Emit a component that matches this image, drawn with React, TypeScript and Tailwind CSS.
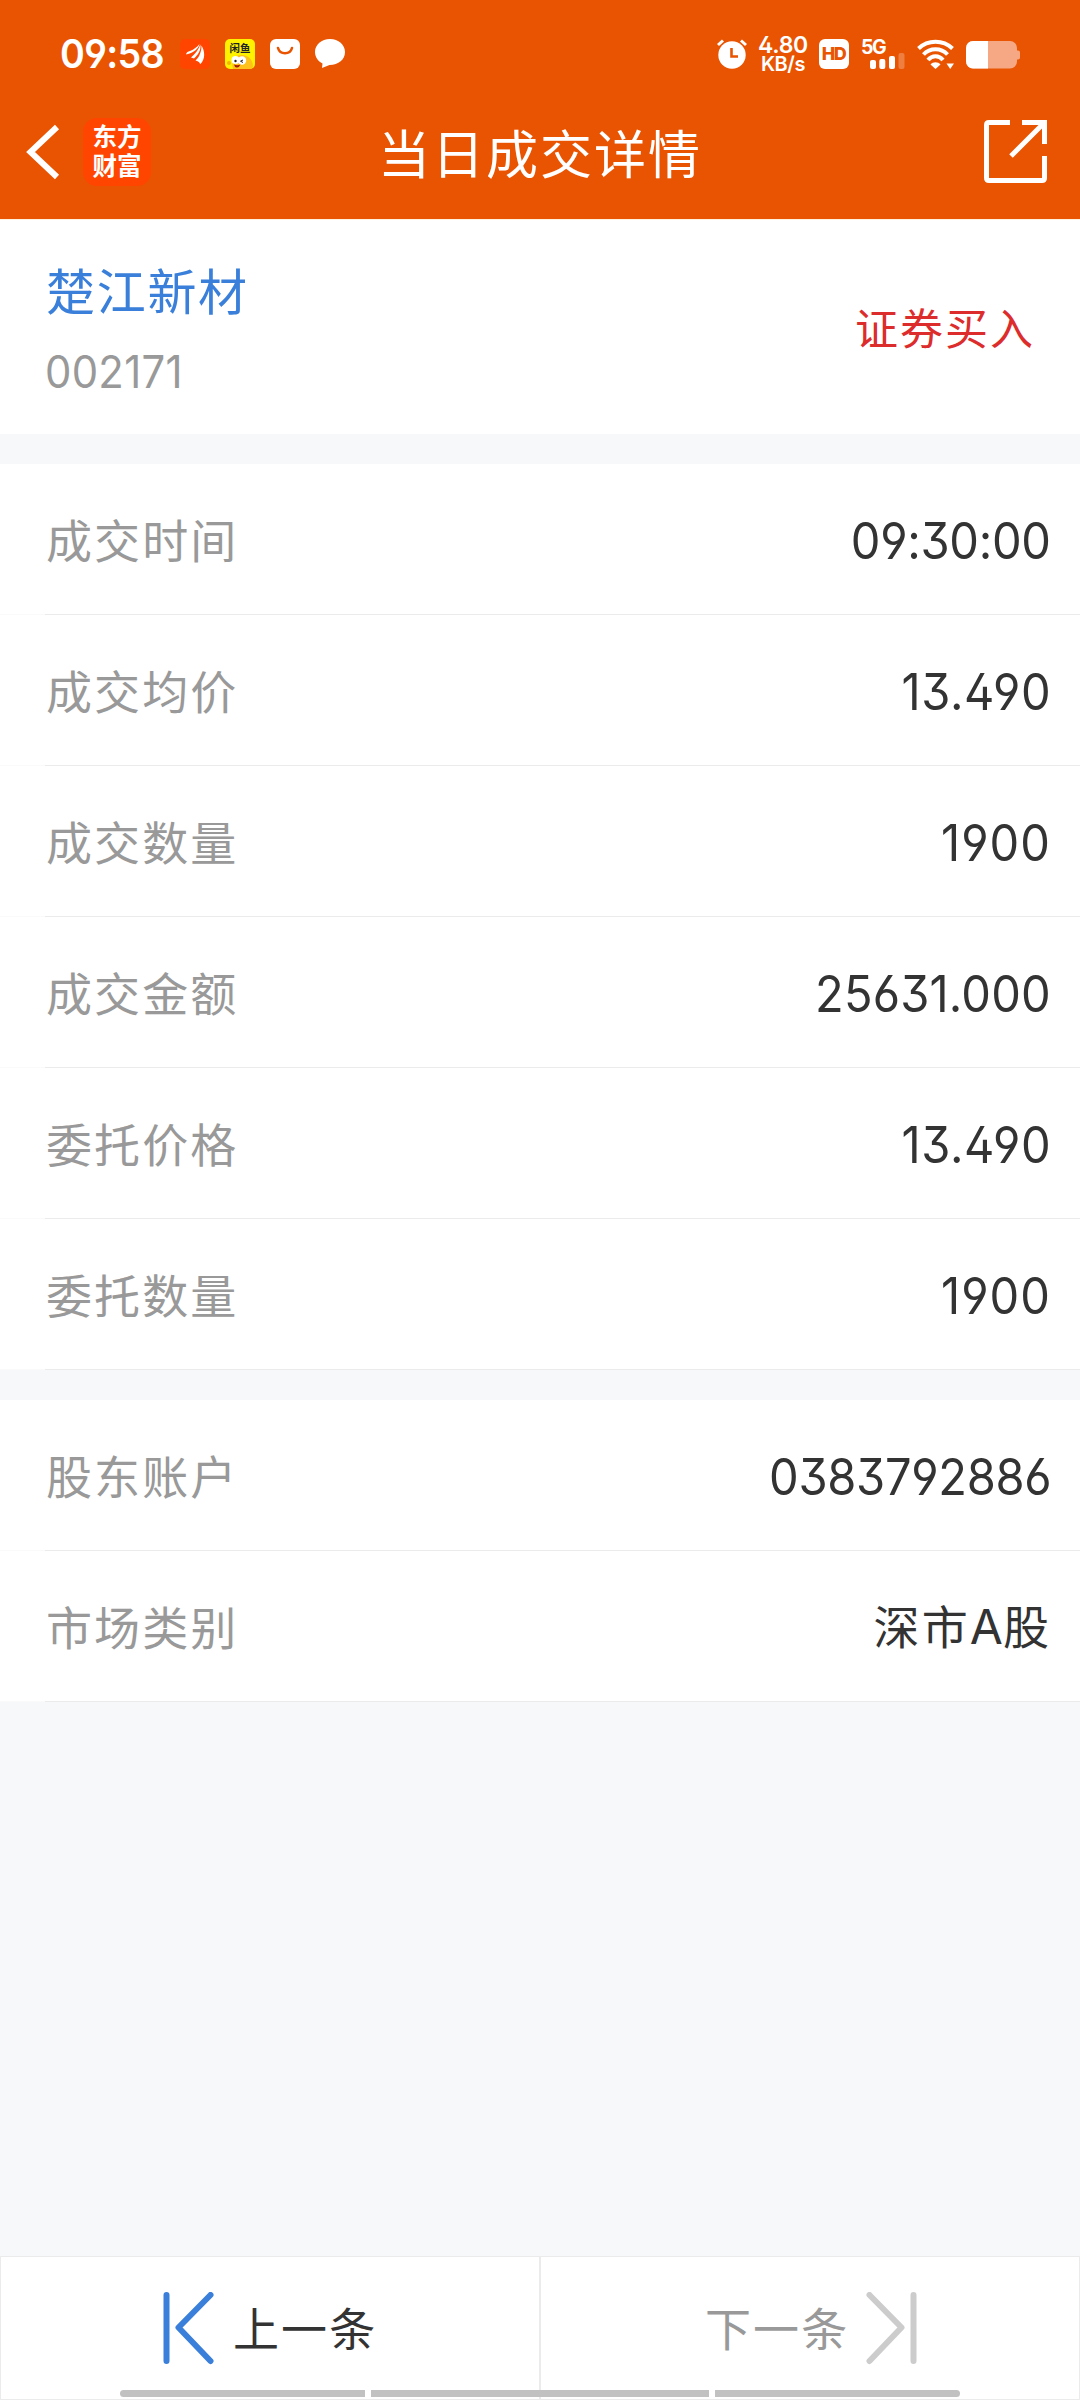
const tradeRows = [
  { label: '成交时间', value: '09:30:00' },
  { label: '成交均价', value: '13.490', spacing: 'tracking-[0.600px]' },
  { label: '成交数量', value: '1900', spacing: 'tracking-[1.100px]' },
  { label: '成交金额', value: '25631.000', spacing: 'tracking-[0.200px]' },
  { label: '委托价格', value: '13.490', spacing: 'tracking-[0.600px]' },
  { label: '委托数量', value: '1900', spacing: 'tracking-[1.100px]' },
];

// Números con Inter (ss01 = dígitos abiertos), textos con Noto CJK
const num = "font-['Inter','Noto_Sans_CJK_SC',sans-serif] [font-feature-settings:'ss01']";

function StatusBar() {
  return (
    <div className="h-[84px] pt-6 flex justify-between items-center text-white">
      <div className="flex items-center pl-[60px]">
        <span className={`${num} w-[120px] origin-left scale-x-[.94] text-[40px] leading-[60px] font-semibold tracking-[-0.700px]`}>09:58</span>
        <div className="flex gap-[15px]">
          <svg width="30" height="30" viewBox="0 0 30 30">
            <rect width="30" height="30" rx="5" fill="#ff4500" />
            <path d="M6 15.500C6.500 13 8 12.500 10 12C14 10.500 17 8 19.500 5C18.500 9.500 14.500 13.500 6 15.500Z" fill="#fff" />
            <path d="M11 18.500C15 15 18.500 11 20.300 5.500C21.500 11 17.500 16.500 14 19.500Z" fill="#fff" />
            <path d="M15.500 21.500C19.500 18 21.500 12 21.500 6.500C25 12 25.500 20 20.500 25C19.500 24.500 20 22.500 15.500 21.500Z" fill="#fff" />
          </svg>
          <svg width="30" height="30" viewBox="0 0 30 30">
            <rect width="30" height="30" rx="5" fill="#fff200" />
            <path d="M8 30C6 22 9 16 16 16C23 16 28 20 28 28L26 30Z" fill="#ffc21a" />
            <circle cx="4" cy="24" r="2" fill="#f5b400" />
            <circle cx="10.500" cy="21" r="4" fill="#fff" />
            <circle cx="17" cy="21.500" r="4.200" fill="#fff" />
            <circle cx="10.500" cy="22" r="1.200" fill="#222" />
            <path d="M18 21L15.500 22.200L18 23.500" fill="none" stroke="#222" strokeWidth="1" />
            <path d="M9 25.500Q12 27 15.500 25.500Q14 29 11.500 28.500Q9.500 28 9 25.500Z" fill="#a51b0a" />
            <text x="15" y="13" textAnchor="middle" fontSize="10.500" className="font-['Noto_Sans_CJK_SC',sans-serif] font-bold" fill="#222">闲鱼</text>
          </svg>
          <svg width="30" height="30" viewBox="0 0 30 30">
            <rect width="30" height="30" rx="6" fill="#fff" />
            <path d="M8 9C10 16 20 16 22 9" fill="none" stroke="#e95402" strokeWidth="2.600" strokeLinecap="round" />
          </svg>
          <svg width="30" height="30" viewBox="0 0 30 30">
            <path d="M15 0C6.500 0 0 5.800 0 13C0 18 3 22.300 7.500 24.500L7 29L14.500 26C23.500 26 30 20.500 30 13C30 5.800 23.500 0 15 0Z" fill="#fff" />
          </svg>
        </div>
      </div>

      <div className="flex items-center pr-[60px]">
        <svg width="30" height="30" viewBox="0 0 30 30" className="mr-[11px]">
          <circle cx="15" cy="16" r="13.700" fill="#fff" />
          <path d="M1 6L6 1.500M29 6L24 1.500" stroke="#fff" strokeWidth="3" />
          <path d="M14.500 9V17.500H21" fill="none" stroke="#e95402" strokeWidth="2.600" />
        </svg>
        <div className={`${num} w-[50px] mr-[11px] text-center font-semibold`}>
          <div className="text-[23px] leading-[20px] tracking-[-0.300px]">4.80</div>
          <div className="text-[20px] leading-[19px] tracking-[-0.400px]">KB/s</div>
        </div>
        <div className={`${num} size-[30px] mr-3 rounded-[6px] bg-white text-[#e95402] text-[18px] leading-[30px] font-extrabold text-center tracking-[-1.500px] pr-[1px]`}>HD</div>
        <svg width="45" height="30" viewBox="0 0 45 30" className="mr-[11px] overflow-visible">
          <text x="0" y="14.500" fontSize="19.500" letterSpacing="-1.500" fill="#fff" className="font-['Inter',sans-serif] font-bold">5G</text>
          <rect x="9" y="21" width="6" height="9" rx="2" fill="#fff" />
          <rect x="18.300" y="20" width="6" height="10" rx="2" fill="#fff" />
          <rect x="28" y="17" width="6" height="13" rx="2" fill="#fff" />
          <rect x="37.500" y="14" width="6" height="16" rx="2" fill="#fff" fillOpacity=".25" />
        </svg>
        <svg width="37" height="30" viewBox="0 0 37 30" className="mr-[12px]">
          <g fill="none" stroke="#fff" strokeWidth="4">
            <path d="M1.500 9.500C11 0.500 26 0.500 35.500 9.500" />
            <path d="M6.500 15.500C13 8.500 24 8.500 30.500 15.500" />
            <path d="M11 21C15 16 22 16 26 21" />
          </g>
          <path d="M13.500 25.500C16 22.500 21 22.500 23.500 25.500L18.500 30Z" fill="#fff" />
          <path d="M29.500 24.500H37L33.200 30Z" fill="#fff" />
        </svg>
        <svg width="54" height="28" viewBox="0 0 54 28" className="mt-[2px]">
          <path d="M7 0H44A7 7 0 0 1 51 7V9.500H52Q54 9.500 54 11.500V16.500Q54 18.500 52 18.500H51V20.500A7 7 0 0 1 44 27.500H7A7 7 0 0 1 0 20.500V7A7 7 0 0 1 7 0Z" fill="#f6a884" />
          <path d="M22 0H7A7 7 0 0 0 0 7V20.500A7 7 0 0 0 7 27.500H22Z" fill="#fff" />
        </svg>
      </div>
    </div>
  );
}

function NavBar() {
  return (
    <div className="h-[135px] grid grid-cols-[1fr_auto_1fr] items-center text-white">
      <div className="flex items-center pl-[26px]">
        <svg width="34" height="56" viewBox="0 0 34 56" className="mr-[23px]">
          <path d="M31 3L4.500 28L31 53" fill="none" stroke="#fff" strokeWidth="6" />
        </svg>
        <div className="size-[68px] rounded-[14px] bg-[#ff4500] text-[24.500px] leading-[29px] font-bold text-center pt-[3px]">
          <div>东方</div>
          <div>财富</div>
        </div>
      </div>
      <h1 className="text-[52px] leading-[70px] tracking-[2px]">当日成交详情</h1>
      <div className="flex justify-end pr-[33px]">
        <svg width="63" height="63" viewBox="0 0 63 63" fill="none" stroke="#fff" strokeWidth="5">
          <path d="M26 2.500H5Q2.500 2.500 2.500 5V58Q2.500 60.500 5 60.500H58Q60.500 60.500 60.500 58V36" />
          <path d="M38 2.500H60.500V24M60.500 2.500L27 36" />
        </svg>
      </div>
    </div>
  );
}

function RowLine() {
  return (
    <div className="h-px flex">
      <div className="w-[45px] bg-[#fafafa]" />
      <div className="flex-1 bg-[#ebebeb]" />
    </div>
  );
}

function Row({ label, value, spacing = 'tracking-[-0.300px]' }: { label: string; value: string; spacing?: string }) {
  return (
    <div className="h-[151px] flex flex-col bg-white">
      <div className="flex-1 flex justify-between items-center pl-[46px] pr-[29px]">
        <span className="text-[46px] leading-[60px] tracking-[2.100px] text-[#999] pb-[3px]">{label}</span>
        <span className={`${num} ${spacing} origin-right scale-x-[.94] text-[50px] leading-[60px] text-[#333] pt-[4px]`}>{value}</span>
      </div>
      <RowLine />
    </div>
  );
}

export default function App() {
  return (
    <div className="relative w-[1080px] h-[2400px] flex flex-col bg-[#f7f8fa] overflow-hidden font-['Noto_Sans_CJK_SC',sans-serif]">
      <header className="bg-[#e95402]">
        <StatusBar />
        <NavBar />
      </header>

      <section className="h-[215px] border-t border-[#fff1dc] bg-white flex justify-between items-center pl-[46px] pr-[45px]">
        <div className="pt-[2px]">
          <div className="text-[49px] leading-[70px] tracking-[1.700px] text-[#3a7fd9]">楚江新材</div>
          <div className={`${num} origin-left scale-x-[.94] text-[44.500px] leading-[60px] tracking-[0.300px] text-[#999] mt-[18px] -ml-px`}>002171</div>
        </div>
        <span className="text-[43px] leading-[60px] tracking-[2px] text-[#dc2c2c] pb-[3px]">证券买入</span>
      </section>

      <section className="mt-[30px]">
        {tradeRows.map((r) => <Row key={r.label} label={r.label} value={r.value} spacing={r.spacing} />)}
      </section>

      <section className="mt-[30px]">
        <Row label="股东账户" value="0383792886" />
        <div className="h-[151px] flex flex-col bg-white">
          <div className="flex-1 flex justify-between items-center pl-[46px] pr-[29px]">
            <span className="text-[46px] leading-[60px] tracking-[2.100px] text-[#999] pb-[3px]">市场类别</span>
            <span className="text-[46px] leading-[60px] tracking-[2.100px] text-[#333] pb-[1px]">深市<span className="font-['Inter'] text-[48px] tracking-[0px]">A</span>股</span>
          </div>
          <RowLine />
        </div>
      </section>

      <footer className="mt-auto h-36 grid grid-cols-2 text-[46px] leading-[60px] tracking-[2.100px]">
        <button className="flex items-center gap-[19px] pl-[162px] bg-white border border-[#ebebeb] text-[#333]">
          <svg width="51" height="73" viewBox="0 0 51 73" fill="none" stroke="#3a7fd9" strokeWidth="6" strokeLinecap="round" strokeLinejoin="round">
            <path d="M3.500 3V69M47.500 3L15.500 35.500L47.500 69" />
          </svg>
          <span className="pb-[5px]">上一条</span>
        </button>
        <button className="flex items-center gap-[17px] pl-[164px] bg-white border border-[#ebebeb] text-[#999]">
          <span className="pb-[5px]">下一条</span>
          <svg width="51" height="73" viewBox="0 0 51 73" fill="none" stroke="#ccc" strokeWidth="6" strokeLinecap="round" strokeLinejoin="round">
            <path d="M47.500 3V69M3.500 3L35.500 35.500L3.500 69" />
          </svg>
        </button>
      </footer>

      {/* barra de gestos del sistema, por encima del footer */}
      <div className="absolute left-[120px] bottom-[3px] w-[840px] h-[7px] flex gap-[6px]">
        <div className="w-[245px] rounded-l-full bg-[#c1c1c1]" />
        <div className="flex-1 bg-[#c1c1c1]" />
        <div className="w-[245px] rounded-r-full bg-[#c1c1c1]" />
      </div>
    </div>
  );
}
